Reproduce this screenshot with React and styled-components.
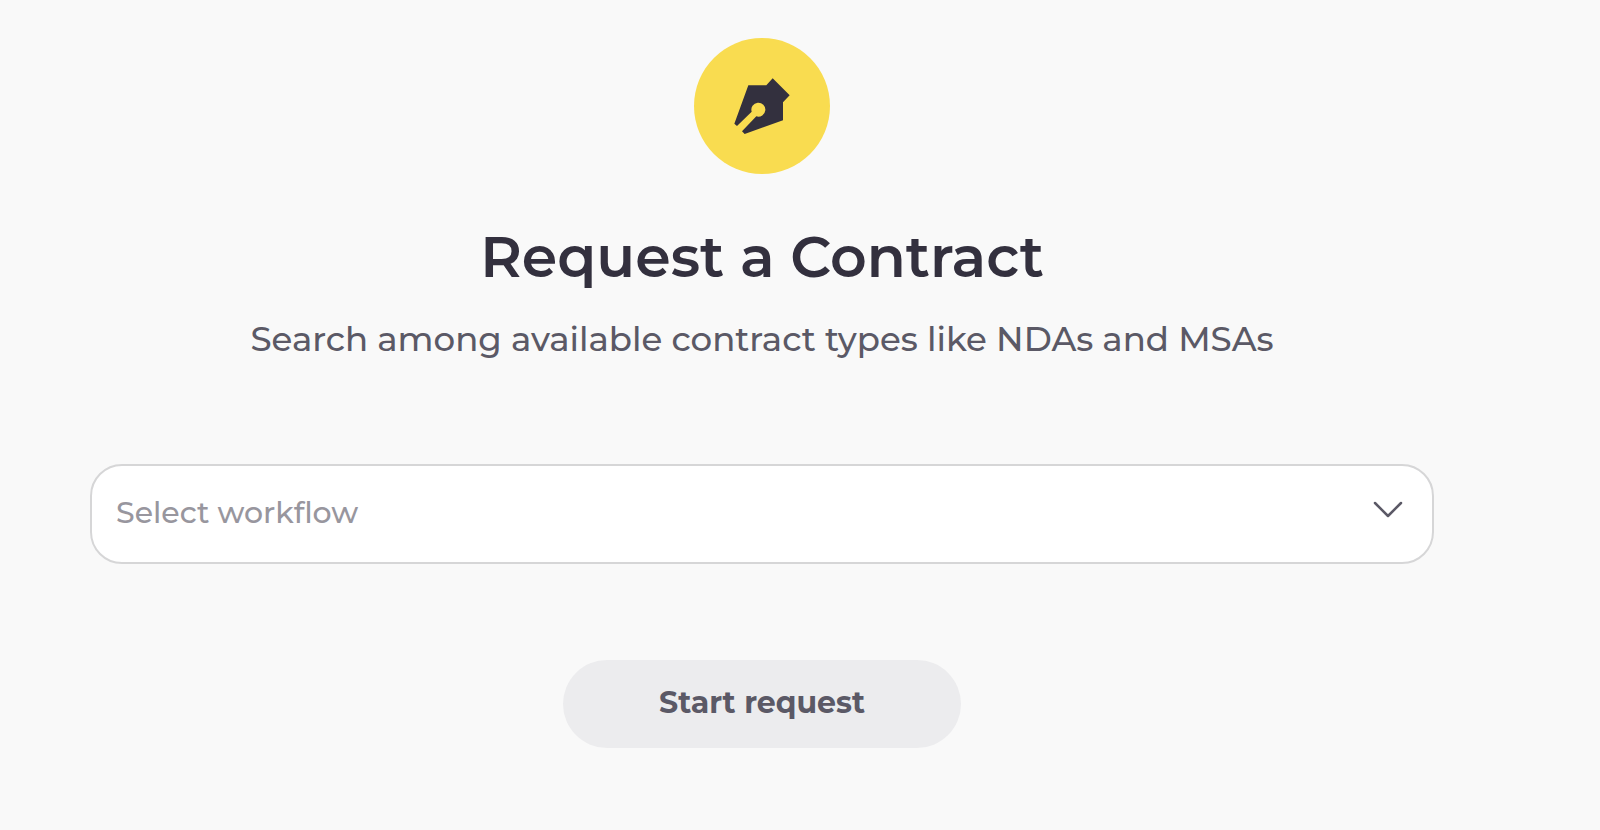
import React, { useState } from 'react';
import styled, { createGlobalStyle } from 'styled-components';

const colors = {
  page: '#f9f9f9',
  ink: '#33303e',
  text: '#5b5966',
  muted: '#98969e',
  border: '#d6d6d7',
  accent: '#f9dc50',
  disabled: '#ececee'
};

const GlobalStyle = createGlobalStyle`
  * {
    box-sizing: border-box;
  }

  body {
    margin: 0;
    background: ${colors.page};
    color: ${colors.ink};
    font-family: Montserrat, Inter, "Liberation Sans", sans-serif;
  }
`;

const Page = styled.main`
  display: flex;
  flex-direction: column;
  align-items: center;
  padding: 38px 166px 80px 90px;
`;

const Badge = styled.div`
  display: flex;
  align-items: center;
  justify-content: center;
  width: 136px;
  height: 136px;
  border-radius: 50%;
  background: ${colors.accent};
`;

const Title = styled.h1`
  margin: 44px 0 0;
  font-size: 57px;
  font-weight: 600;
  line-height: 78px;
`;

const Subtitle = styled.p`
  margin: 20px 0 0;
  color: ${colors.text};
  font-size: 34px;
  font-weight: 500;
  line-height: 46px;
`;

const Form = styled.form`
  display: flex;
  flex-direction: column;
  align-items: center;
  align-self: stretch;
  gap: 96px;
  margin-top: 102px;
`;

const Field = styled.div`
  position: relative;
  align-self: stretch;
`;

const Select = styled.select`
  display: block;
  width: 100%;
  height: 100px;
  padding: 0 80px 4px 24px;
  border: 2px solid ${colors.border};
  border-radius: 32px;
  background: #fff;
  color: ${({ $empty }) => ($empty ? colors.muted : colors.ink)};
  font-family: inherit;
  font-size: 30px;
  font-weight: 500;
  appearance: none;
`;

const Chevron = styled.svg`
  position: absolute;
  top: 35px;
  right: 30px;
  pointer-events: none;
`;

const Button = styled.button`
  width: 398px;
  height: 88px;
  padding: 0 0 4px;
  border: 0;
  border-radius: 44px;
  background: ${colors.disabled};
  color: ${colors.text};
  font-family: inherit;
  font-size: 30px;
  font-weight: 700;
`;

const PenIcon = () => (
  <svg width="56" height="56" viewBox="161 159 168 168" aria-hidden="true">
    <path
      fill={colors.ink}
      d="M204 181H258L277 160L328 211L308 232V286L193 327L185 319L228 274A21 21 0 1 0 214 260L170 303L162 296Z"
    />
  </svg>
);

const App = () => {
  const [workflow, setWorkflow] = useState('');

  return (
    <>
      <GlobalStyle />
      <Page>
        <Badge>
          <PenIcon />
        </Badge>
        <Title>Request a Contract</Title>
        <Subtitle>Search among available contract types like NDAs and MSAs</Subtitle>
        <Form onSubmit={event => event.preventDefault()}>
          <Field>
            <Select
              aria-label="Select workflow"
              $empty={!workflow}
              value={workflow}
              onChange={event => setWorkflow(event.target.value)}
            >
              <option value="">Select workflow</option>
            </Select>
            <Chevron width="32" height="20" viewBox="0 0 32 20" aria-hidden="true">
              <path
                d="M3 4L16 17L29 4"
                fill="none"
                stroke={colors.text}
                strokeWidth="2.5"
                strokeLinecap="round"
                strokeLinejoin="round"
              />
            </Chevron>
          </Field>
          <Button type="submit" disabled={!workflow}>
            Start request
          </Button>
        </Form>
      </Page>
    </>
  );
};

export default App;
